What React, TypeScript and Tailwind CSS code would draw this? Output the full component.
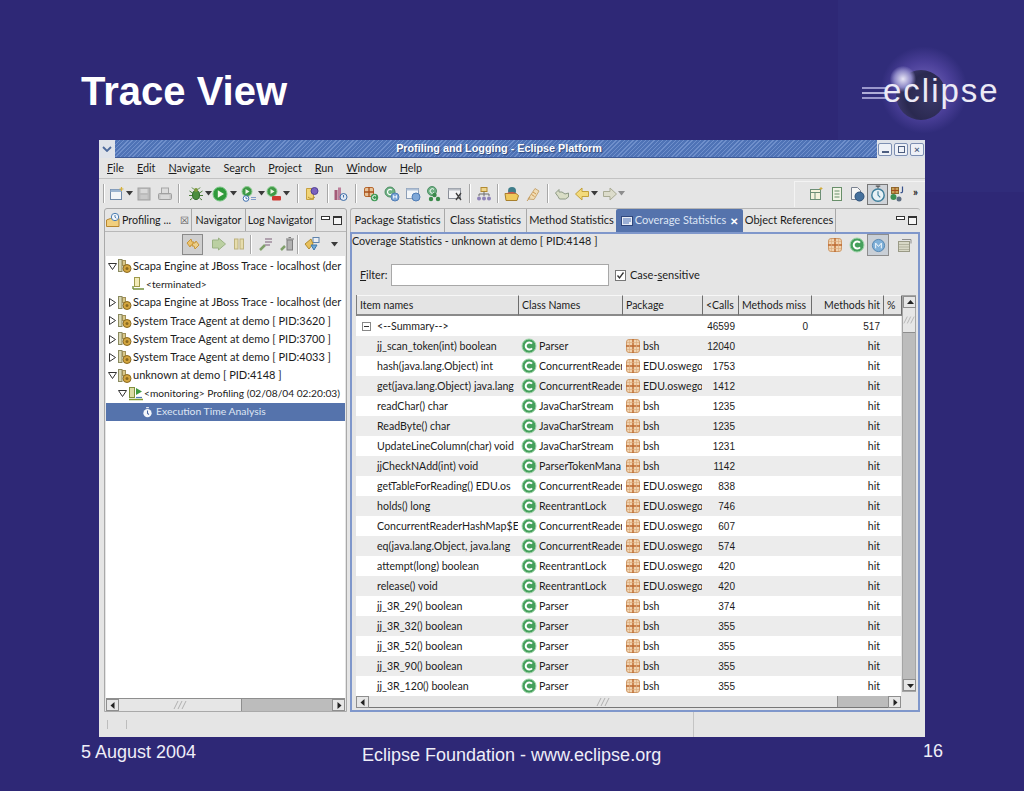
import React from "react";

type P = { children?: React.ReactNode; s?: number };
const Svg = ({ children, s = 16 }: P) => (
  <svg width={s} height={s} viewBox="0 0 16 16" className="shrink-0" fill="none">
    {children}
  </svg>
);

const Cls = () => (
  <Svg>
    <circle cx="8" cy="8" r="7" fill="#45a05c" stroke="#9ed4a8" strokeWidth="1" />
    <path d="M11 5.600A3.600 3.600 0 1 0 11 10.400" stroke="#fff" strokeWidth="2" />
  </Svg>
);
const Pkg = () => (
  <Svg>
    <rect x="1.500" y="1.500" width="13" height="13" rx="2.500" fill="#f0d3b0" stroke="#d09a68" />
    <path d="M8 1v14M1 8h14" stroke="#bd6a30" strokeWidth="1.400" />
    <path d="M4.500 2v12M11.500 2v12M2 4.500h12M2 11.500h12" stroke="#dcae80" strokeWidth=".7" />
  </Svg>
);
const Arrow = () => (
  <svg width="7" height="5" viewBox="0 0 7 5" className="shrink-0">
    <path d="M0 0h7L3.500 4.500z" fill="#3a3a3a" />
  </svg>
);
const ArrowLight = () => (
  <svg width="7" height="5" viewBox="0 0 7 5" className="shrink-0">
    <path d="M0 0h7L3.500 4.500z" fill="#8d8d8d" />
  </svg>
);
const NewI = () => (
  <Svg>
    <rect x="1.500" y="3.500" width="11" height="10" fill="#f3f5f8" stroke="#6f88a8" />
    <path d="M1.500 3.500h11v2.500h-11z" fill="#9cb4d0" />
    <path d="M12.500 1v4M10.500 3h4" stroke="#d8b23c" strokeWidth="1.200" />
  </Svg>
);
const SaveI = () => (
  <Svg>
    <rect x="2" y="2" width="12" height="12" fill="#bcbcbc" stroke="#a2a2a2" />
    <rect x="4.500" y="3" width="7" height="4" fill="#d9d9d9" />
    <rect x="4.500" y="9" width="7" height="4" fill="#c9c9c9" />
  </Svg>
);
const PrintI = () => (
  <Svg>
    <rect x="4.500" y="2" width="7" height="6" fill="#dcdcdc" stroke="#a5a5a5" />
    <rect x="1.500" y="7.500" width="13" height="6" rx="1" fill="#c5c5c5" stroke="#a0a0a0" />
    <path d="M3.500 10h9M3.500 12h9" stroke="#ececec" />
  </Svg>
);
const Bug = () => (
  <Svg>
    <ellipse cx="8" cy="9" rx="3.500" ry="4.500" fill="#4c8f3f" stroke="#2e6a2a" />
    <circle cx="8" cy="4" r="2" fill="#7d9a3a" />
    <path d="M1.500 5l3 2M14.500 5l-3 2M1 9.500h3M15 9.500h-3M2 14l2.500-2M14 14l-2.500-2M4 1.500l2 2M12 1.500l-2 2" stroke="#4a7d38" />
  </Svg>
);
const Run = () => (
  <Svg>
    <circle cx="8" cy="8" r="7" fill="#2f9a3b" stroke="#7ac785" />
    <path d="M5.800 4.200L12 8l-6.200 3.800z" fill="#f2f7ea" />
  </Svg>
);
const RunExt = () => (
  <Svg>
    <circle cx="6" cy="5.500" r="5" fill="#3f9a46" stroke="#8ecb92" />
    <path d="M4.500 3l4 2.500-4 2.500z" fill="#eef5e5" />
    <circle cx="5" cy="12.500" r="2.800" fill="#fff" stroke="#3f6fb0" />
    <path d="M5 11v1.700h1.500" stroke="#3f6fb0" />
    <path d="M10 11.500h5M10 13.500h5" stroke="#7f9cc8" />
  </Svg>
);
const RunRed = () => (
  <Svg>
    <circle cx="6" cy="5.500" r="5" fill="#3f9a46" stroke="#8ecb92" />
    <path d="M4.500 3l4 2.500-4 2.500z" fill="#eef5e5" />
    <rect x="6" y="10" width="9" height="4.500" rx="1" fill="#cf3a32" />
  </Svg>
);
const Persp = () => (
  <Svg>
    <path d="M2.500 2.500h7v11h-7z" fill="#f1d477" stroke="#c6a040" />
    <circle cx="10.500" cy="5" r="3.500" fill="#7a62bf" stroke="#534096" />
    <path d="M4 11c2 2 5 2 7 0" stroke="#b48f36" />
  </Svg>
);
const Bars = () => (
  <Svg>
    <rect x="2.500" y="4" width="3" height="10" fill="#a45a78" />
    <rect x="6" y="1.500" width="3" height="12.500" fill="#bd7f9a" />
    <circle cx="11.500" cy="11" r="3.500" fill="#dfe8f3" stroke="#3f6fa8" />
    <path d="M11.500 9v2.500" stroke="#3f6fa8" />
  </Svg>
);
const PkgC = () => (
  <Svg>
    <rect x="1.500" y="1.500" width="9" height="9" rx="1.500" fill="#e7c39a" stroke="#b86a30" />
    <path d="M6 1v10M1 6h10" stroke="#a8501c" strokeWidth="1.300" />
    <circle cx="11.500" cy="11.500" r="3.700" fill="#3f9a56" />
    <path d="M13 10.200a2 2 0 1 0 0 2.600" stroke="#fff" />
  </Svg>
);
const GreenBlue = () => (
  <Svg>
    <circle cx="6" cy="6" r="5" fill="#6fb184" stroke="#4f8f65" />
    <path d="M8 4.200a2.600 2.600 0 1 0 0 3.600" stroke="#fff" strokeWidth="1.200" />
    <circle cx="11" cy="11" r="4" fill="#7fa8d8" stroke="#4f7cb5" />
    <path d="M9.500 12.500v-3l1.500 2 1.500-2v3" stroke="#fff" strokeWidth=".8" />
  </Svg>
);
const WinBlue = () => (
  <Svg>
    <rect x="1.500" y="2.500" width="12" height="10" fill="#f2f5f8" stroke="#8c9eb6" />
    <path d="M1.500 2.500h12v2h-12z" fill="#b0c1d6" />
    <circle cx="11" cy="11" r="4" fill="#7fa8d8" stroke="#4f7cb5" />
  </Svg>
);
const GreenTri = () => (
  <Svg>
    <circle cx="6" cy="5" r="4.500" fill="#6fb184" stroke="#4f8f65" />
    <path d="M8 3.400a2.300 2.300 0 1 0 0 3.200" stroke="#fff" />
    <circle cx="8.500" cy="9" r="2.200" fill="#3a8a4a" />
    <circle cx="5" cy="13" r="2.200" fill="#3a8a4a" />
    <circle cx="12" cy="13" r="2.200" fill="#3a8a4a" />
  </Svg>
);
const WinX = () => (
  <Svg>
    <rect x="1.500" y="2.500" width="12" height="10" fill="#f2f3f5" stroke="#8a8f98" />
    <path d="M1.500 2.500h12v2h-12z" fill="#b9bdc4" />
    <path d="M9 7l5 7M14 7l-5 7" stroke="#404040" strokeWidth="1.300" />
  </Svg>
);
const Tree = () => (
  <Svg>
    <rect x="5" y="1.500" width="6" height="4" fill="#eed58b" stroke="#b38a30" />
    <path d="M8 5.500V8M3 10V8h10v2M8 8v2" stroke="#6f6f6f" />
    <circle cx="3" cy="12.500" r="2" fill="#8e83b8" />
    <circle cx="8" cy="12.500" r="2" fill="#8e83b8" />
    <circle cx="13" cy="12.500" r="2" fill="#8e83b8" />
  </Svg>
);
const Open = () => (
  <Svg>
    <circle cx="8" cy="5" r="4" fill="#3e7d8a" />
    <path d="M1 7.500h11l2.500 2-1.500 5H2z" fill="#efc95c" stroke="#a8802c" />
    <path d="M3 7.500c1-2 8-2 9 0" fill="#d05a4a" />
  </Svg>
);
const Pin = () => (
  <Svg>
    <path d="M3 13L10 2.500l4 2.500-5 8.500z" fill="#f0dcb4" stroke="#c9a874" />
    <path d="M2 15l3-4" stroke="#c59a5a" />
    <path d="M8 6l3 2M6.500 8.500l3 2" stroke="#cf9850" />
  </Svg>
);
const BackTo = () => (
  <Svg>
    <path d="M1.500 7L5 3.500V6h3l3 2 3.500-1v4l-3 2H5.500L4 10.500z" fill="#d9ddc6" stroke="#8e9a86" />
  </Svg>
);
const Left = () => (
  <Svg>
    <path d="M1.500 8L8 2v3.500h6.500v5H8V14z" fill="#f3da7b" stroke="#c3a13a" />
  </Svg>
);
const Right = () => (
  <Svg>
    <path d="M14.500 8L8 2v3.500H1.500v5H8V14z" fill="#dcdccb" stroke="#a9ab94" />
  </Svg>
);
const Layout1 = () => (
  <Svg>
    <rect x="2.500" y="3.500" width="10" height="10" fill="#f5f3dc" stroke="#6e8f76" />
    <path d="M2.500 6.500h10M7 6.500v7" stroke="#6e8f76" />
    <path d="M13 1v3M11.500 2.500h3" stroke="#d2ac3c" />
  </Svg>
);
const Doc = () => (
  <Svg>
    <rect x="3.500" y="1.500" width="9" height="13" fill="#f1f4e6" stroke="#688f6a" />
    <path d="M5.500 5h5M5.500 8h5M5.500 11h5" stroke="#688f6a" />
  </Svg>
);
const DocGlobe = () => (
  <Svg>
    <path d="M2.500 1.500h6l3 3v9h-9z" fill="#f5f5f5" stroke="#7a8290" />
    <circle cx="10.500" cy="10.500" r="4.500" fill="#45709c" stroke="#2d5078" />
  </Svg>
);
const Watch = () => (
  <svg width="18" height="18" viewBox="0 0 16 16" className="shrink-0" fill="none">
    <path d="M6 1h4M8 1v2" stroke="#555" />
    <circle cx="8" cy="9" r="5.500" fill="#e8f1f6" stroke="#3f7f9c" strokeWidth="1.300" />
    <path d="M8 5.500V9l2 2" stroke="#3f7f9c" />
  </svg>
);
const Java = () => (
  <Svg>
    <rect x="2.500" y="1.500" width="7" height="6" fill="#c9a25a" stroke="#8d6a2e" />
    <path d="M6 1v7M2 4.500h8" stroke="#a14c1e" />
    <circle cx="4.500" cy="11" r="3" fill="#3d8f52" />
    <circle cx="10" cy="13" r="2.500" fill="#5d6d82" />
    <path d="M13.500 0.500v5c0 1-1 1.500-2 1" stroke="#37518c" strokeWidth="1.200" />
  </Svg>
);
const EngineI = () => (
  <Svg>
    <rect x="1.500" y="1.500" width="3.500" height="12" fill="#d9d6b2" stroke="#8a8a60" />
    <rect x="5.500" y="2.500" width="3" height="5" fill="#d9c98a" stroke="#a0905a" />
    <circle cx="10" cy="10.500" r="4" fill="#d4a640" stroke="#8a6a20" />
    <circle cx="10" cy="10.500" r="1.500" fill="#8a6a20" />
  </Svg>
);
const Terminated = () => (
  <Svg>
    <rect x="4.500" y="1.500" width="5" height="9" fill="#f3ecb8" stroke="#9f9a4a" />
    <path d="M3 13h11M3 10v3" stroke="#75913c" strokeWidth="1.400" />
  </Svg>
);
const Monitor = () => (
  <Svg>
    <rect x="1.500" y="1.500" width="5" height="10" fill="#dcdca4" stroke="#7f8f3c" />
    <path d="M8 2l6 3.500L8 9z" fill="#3f9a3f" />
    <path d="M1 13.500h14" stroke="#7f9a2c" strokeWidth="1.500" />
    <path d="M8 11.500h6" stroke="#4f7cb5" strokeWidth="1.200" />
  </Svg>
);
const Analysis = () => (
  <svg width="11" height="11" viewBox="0 0 16 16" className="shrink-0" fill="none">
    <path d="M6 1h4" stroke="#fff" strokeWidth="1.500" />
    <circle cx="8" cy="9" r="6" fill="#f4f6fa" />
    <path d="M8 5v4l2 2" stroke="#47639c" strokeWidth="1.500" />
  </svg>
);
const Profile = () => (
  <Svg>
    <path d="M1.500 8l4-1.500h8.500v8H1.500z" fill="#f1cf7e" stroke="#b8862e" />
    <circle cx="10" cy="5" r="3.700" fill="#f3f6fa" stroke="#4a7db0" />
    <path d="M10 3v2.200l1.300 1" stroke="#4a7db0" />
  </Svg>
);
const Sync = () => (
  <Svg>
    <path d="M2 7l4-4 1 3h2l-1 3H6l-1 2z" fill="#ecc46e" stroke="#c8963a" />
    <path d="M14 9l-4 4-1-3H7l1-3h2l1-2z" fill="#ecd08c" stroke="#c8963a" />
  </Svg>
);
const Play2 = () => (
  <Svg>
    <path d="M1.500 4h6V2l7 6-7 6v-2h-6z" fill="#bbd0a2" stroke="#9bb284" />
  </Svg>
);
const Pause2 = () => (
  <Svg>
    <rect x="3.500" y="3" width="3.500" height="10" fill="#e6dcac" stroke="#bdb27c" />
    <rect x="9" y="3" width="3.500" height="10" fill="#e6dcac" stroke="#bdb27c" />
  </Svg>
);
const Split = () => (
  <Svg>
    <path d="M2 14l5-5" stroke="#7fa06a" strokeWidth="2.500" />
    <path d="M7 3h7M7 6h7M7 9h5" stroke="#9e8a9c" strokeWidth="1.300" />
  </Svg>
);
const Trash = () => (
  <Svg>
    <path d="M2 14l4-4" stroke="#7fa06a" strokeWidth="2.500" />
    <rect x="8" y="4" width="5.500" height="10" fill="#b2b2b2" stroke="#7d7d7d" />
    <path d="M7 3h8M9.500 1.500h2.500" stroke="#7d7d7d" />
  </Svg>
);
const Filters = () => (
  <Svg>
    <rect x="9" y="1.500" width="6" height="5" fill="#e9eef4" stroke="#5f82aa" />
    <path d="M1 8l6-5 2 5-4 5z" fill="#e8c05c" stroke="#b28c2e" />
    <path d="M7 9l6 0-3 5z" fill="#6fa8d8" stroke="#3f78a8" />
  </Svg>
);
const MinMax = () => (
  <div className="flex items-center gap-[3px] shrink-0">
    <div className="w-[9px] h-[4px] border border-[#333] bg-white -mt-[5px]" />
    <div className="w-[9px] h-[9px] border border-[#333] border-t-2 bg-[#f5f5f5]" />
  </div>
);
const Sep = ({ w }: { w: string }) => (
  <div className={`${w} flex justify-center shrink-0`}>
    <div className="w-[2px] h-[19px] border-l border-[#a8a8a8] bg-white" />
  </div>
);
const T = ({ w, children }: { w: string; children: React.ReactNode }) => (
  <div className={`${w} h-[18px] flex items-center justify-center shrink-0`}>{children}</div>
);

const Tri = ({ open }: { open?: boolean }) =>
  open ? (
    <svg width="9" height="7" viewBox="0 0 9 7" className="shrink-0">
      <path d="M.5.500h8L4.500 6.500z" fill="#fff" stroke="#333" />
    </svg>
  ) : (
    <svg width="7" height="9" viewBox="0 0 7 9" className="shrink-0">
      <path d="M.5.500v8L6.500 4.500z" fill="#fff" stroke="#333" />
    </svg>
  );

const EngineRow = ({ open, label }: { open?: boolean; label: string }) => (
  <div className="h-[18.25px] flex items-center text-[11px]">
    <div className="w-[12px] flex justify-center shrink-0">
      <Tri open={open} />
    </div>
    <div className="w-[14px] flex justify-center shrink-0">
      <EngineI />
    </div>
    <span className="ml-[1px]">{label}</span>
  </div>
);

const rows: [string, string, string, string][] = [
  ["jj_scan_token(int) boolean", "Parser", "bsh", "12040"],
  ["hash(java.lang.Object) int", "ConcurrentReader", "EDU.oswego", "1753"],
  ["get(java.lang.Object) java.lang", "ConcurrentReader", "EDU.oswego", "1412"],
  ["readChar() char", "JavaCharStream", "bsh", "1235"],
  ["ReadByte() char", "JavaCharStream", "bsh", "1235"],
  ["UpdateLineColumn(char) void", "JavaCharStream", "bsh", "1231"],
  ["jjCheckNAdd(int) void", "ParserTokenMana", "bsh", "1142"],
  ["getTableForReading() EDU.os", "ConcurrentReader", "EDU.oswego", "838"],
  ["holds() long", "ReentrantLock", "EDU.oswego", "746"],
  ["ConcurrentReaderHashMap$E", "ConcurrentReader", "EDU.oswego", "607"],
  ["eq(java.lang.Object, java.lang", "ConcurrentReader", "EDU.oswego", "574"],
  ["attempt(long) boolean", "ReentrantLock", "EDU.oswego", "420"],
  ["release() void", "ReentrantLock", "EDU.oswego", "420"],
  ["jj_3R_29() boolean", "Parser", "bsh", "374"],
  ["jj_3R_32() boolean", "Parser", "bsh", "355"],
  ["jj_3R_52() boolean", "Parser", "bsh", "355"],
  ["jj_3R_90() boolean", "Parser", "bsh", "355"],
  ["jj_3R_120() boolean", "Parser", "bsh", "355"],
];

const cols = "grid grid-cols-[162px_104px_80px_36px_73px_72px_18px]";
const num = "text-right pr-[3px] pt-[1px] text-[10px] font-['Liberation_Sans',sans-serif]";

const Hd = ({ children, right }: { children?: React.ReactNode; right?: boolean }) => (
  <div
    className={`h-[21px] flex items-center px-[3px] pt-[1px] overflow-hidden border-r border-b-2 border-r-[#6d6d6d] border-b-[#8a8a8a] border-t border-t-[#f7f7f7] bg-[#e4e4e4] ${
      right ? "justify-end" : ""
    }`}
  >
    {children}
  </div>
);

const Arr = ({ d }: { d: "l" | "r" | "u" | "d" }) => {
  const p = { l: "M5.500 1v7L1.500 4.500z", r: "M2.500 1v7l4-3.500z", u: "M1 6h7L4.500 2z", d: "M1 3h7L4.500 7z" }[d];
  return (
    <svg width="8" height="9" viewBox="0 0 8 9">
      <path d={p} fill="#222" />
    </svg>
  );
};
const SBtn = ({ d }: { d: "l" | "r" | "u" | "d" }) => (
  <div className="w-[13px] h-[12px] shrink-0 flex items-center justify-center bg-[#e6e6e6] border border-[#8e8e8e]">
    <Arr d={d} />
  </div>
);

const Hatch = () => (
  <svg width="14" height="8" viewBox="0 0 14 8" fill="none">
    <path d="M1 8l4-8M5 8l4-8M9 8l4-8" stroke="#b0b0b0" />
  </svg>
);

export default function App() {
  return (
    <div className="relative w-[1024px] h-[791px] overflow-hidden bg-[#2e2876] text-white font-['Liberation_Sans',sans-serif] flex flex-col">
      <div className="absolute right-0 top-0 w-[186px] h-[192px] bg-[#302c7a]">
        <div className="absolute left-[42px] top-[46px] w-[88px] h-[88px] rounded-full bg-[radial-gradient(circle,#7a6cc0_0%,#4a3f98_45%,#302c7a_70%)]" />
        <div className="absolute left-[58px] top-[70px] w-[50px] h-[50px] rounded-full bg-[radial-gradient(circle_at_70%_55%,#3a3868_0%,#2a2950_55%,#4a4680_100%)]" />
        <div className="absolute left-[52px] top-[66px] w-[26px] h-[26px] rounded-full bg-[radial-gradient(circle,#e8e6f6_0%,#8d88c6_45%,transparent_72%)]" />
        <div className="absolute left-[24px] top-[87px] w-[24px] flex flex-col gap-[3px]">
          <div className="h-[2px] bg-[#9a97cc]" />
          <div className="h-[2px] bg-[#b0aed8]" />
          <div className="h-[2px] bg-[#9a97cc]" />
        </div>
        <div className="absolute left-[45px] top-[72px] text-[33px] leading-[38px] tracking-[2px] text-[#eceaf6]">
          eclipse
        </div>
      </div>

      <div className="h-[140px] pl-[81px] pt-[69px] shrink-0 relative">
        <h1 className="text-[40px] leading-[45px] font-bold">Trace View</h1>
      </div>

      <div className="relative ml-[99px] w-[826px] h-[597px] shrink-0 bg-[#e5e5e5] flex flex-col text-[#1c1c1c] font-['Lato',sans-serif] text-[10.8px] whitespace-nowrap">
        {/* title bar */}
        <div className="h-[18px] flex shrink-0 items-stretch bg-[#dfe3ea]">
          <div className="w-[16px] bg-[#dfe3ea] flex items-center justify-center">
            <svg width="10" height="6" viewBox="0 0 10 6" fill="none">
              <path d="M1 1l4 4 4-4" stroke="#4d6a9c" strokeWidth="1.800" />
            </svg>
          </div>
          <div className="flex-1 flex items-center justify-center bg-[repeating-linear-gradient(135deg,#6f8fcb_0px,#6f8fcb_1px,#4f73b6_1px,#4f73b6_3px)] border-b border-[#3e5a96]">
            <span className="font-bold text-white text-[10.8px] font-['Liberation_Sans',sans-serif] [text-shadow:1px_1px_1px_#2f4678] ml-[6px]">
              Profiling and Logging - Eclipse Platform
            </span>
          </div>
          <div className="w-[48px] flex items-center justify-center gap-[2px] bg-[#dfe3ea]">
            <div className="w-[14px] h-[13px] rounded-[2px] border border-[#7d8fb2] bg-[#eef1f7] flex items-end justify-center pb-[2px]">
              <div className="w-[7px] h-[2px] bg-[#4d5e80]" />
            </div>
            <div className="w-[14px] h-[13px] rounded-[2px] border border-[#7d8fb2] bg-[#eef1f7] flex items-center justify-center">
              <div className="w-[7px] h-[7px] border border-[#4d5e80]" />
            </div>
            <div className="w-[14px] h-[13px] rounded-[2px] border border-[#7d8fb2] bg-[#eef1f7] flex items-center justify-center text-[10px] font-bold leading-none text-[#4d5e80]">
              ×
            </div>
          </div>
        </div>

        {/* menu */}
        <div className="h-[21px] shrink-0 flex items-center pl-[8px] gap-[13px] border-b border-[#c2c2c2]">
          <span><u>F</u>ile</span>
          <span><u>E</u>dit</span>
          <span><u>N</u>avigate</span>
          <span>Se<u>a</u>rch</span>
          <span><u>P</u>roject</span>
          <span><u>R</u>un</span>
          <span><u>W</u>indow</span>
          <span><u>H</u>elp</span>
        </div>

        {/* toolbar */}
        <div className="h-[29px] shrink-0 flex items-center">
          <Sep w="w-[10px]" />
          <T w="w-[15px]"><NewI /></T>
          <T w="w-[10px]"><Arrow /></T>
          <T w="w-[20px]"><SaveI /></T>
          <T w="w-[21px]"><PrintI /></T>
          <Sep w="w-[8px]" />
          <div className="w-[4px] shrink-0" />
          <T w="w-[18px]"><Bug /></T>
          <T w="w-[6px]"><Arrow /></T>
          <T w="w-[18px]"><Run /></T>
          <T w="w-[8px]"><Arrow /></T>
          <div className="w-[3px] shrink-0" />
          <T w="w-[18px]"><RunExt /></T>
          <T w="w-[6px]"><Arrow /></T>
          <T w="w-[20px]"><RunRed /></T>
          <T w="w-[4px]"><Arrow /></T>
          <div className="w-[5px] shrink-0" />
          <Sep w="w-[10px]" />
          <T w="w-[18px]"><Persp /></T>
          <div className="w-[2px] shrink-0" />
          <Sep w="w-[10px]" />
          <T w="w-[14px]"><Bars /></T>
          <div className="w-[4px] shrink-0" />
          <Sep w="w-[10px]" />
          <T w="w-[20px]"><PkgC /></T>
          <T w="w-[21px]"><GreenBlue /></T>
          <T w="w-[21px]"><WinBlue /></T>
          <T w="w-[21px]"><GreenTri /></T>
          <T w="w-[21px]"><WinX /></T>
          <Sep w="w-[10px]" />
          <T w="w-[18px]"><Tree /></T>
          <Sep w="w-[10px]" />
          <T w="w-[18px]"><Open /></T>
          <T w="w-[24px]"><Pin /></T>
          <Sep w="w-[6px]" />
          <T w="w-[22px]"><BackTo /></T>
          <T w="w-[18px]"><Left /></T>
          <T w="w-[6px]"><Arrow /></T>
          <div className="w-[4px] shrink-0" />
          <T w="w-[18px]"><Right /></T>
          <T w="w-[4px]"><ArrowLight /></T>
          <div className="flex-1" />
          <div className="flex items-center h-[26px] border-l border-t border-[#f3f3f3] pl-[10px]">
            <T w="w-[21px]"><Layout1 /></T>
            <T w="w-[21px]"><Doc /></T>
            <T w="w-[20px]"><DocGlobe /></T>
            <div className="w-[21px] h-[21px] shrink-0 flex items-center justify-center border border-[#777] bg-[#cfd3d8]">
              <Watch />
            </div>
            <T w="w-[18px]"><Java /></T>
            <T w="w-[19px]"><span className="text-[11px] font-bold leading-none -mt-[5px]">»</span></T>
          </div>
        </div>

        {/* panels */}
        <div className="flex-1 min-h-0 flex pl-[5px] gap-[3px]">
          {/* left panel */}
          <div className="w-[243px] h-[504px] shrink-0 flex flex-col border border-[#a9a9a9] rounded-t-[3px] bg-[#e5e5e5]">
            <div className="h-[23px] shrink-0 flex items-stretch border-b border-[#b8b8b8] text-[10.7px]">
              <div className="w-[87px] flex items-center shrink-0 border-r border-[#a9a9a9]">
                <Profile />
                <span className="ml-[1px]">Profiling ...</span>
                <span className="ml-[9px] text-[10px] leading-none text-[#555]">☒</span>
              </div>
              <div className="w-[54px] flex items-center justify-center shrink-0 border-r border-[#a9a9a9]">Navigator</div>
              <div className="w-[70px] flex items-center justify-center shrink-0 border-r border-[#a9a9a9]">Log Navigator</div>
              <div className="flex-1 flex items-center justify-center"><MinMax /></div>
            </div>
            <div className="h-[24px] shrink-0 flex items-center justify-end pr-[1px]">
              <div className="w-[21px] h-[21px] flex items-center justify-center border border-[#8a8a8a] bg-[#cfcfcf] mr-[5px]">
                <Sync />
              </div>
              <T w="w-[22px]"><Play2 /></T>
              <T w="w-[18px]"><Pause2 /></T>
              <Sep w="w-[6px]" />
              <T w="w-[24px]"><Split /></T>
              <T w="w-[18px]"><Trash /></T>
              <Sep w="w-[4px]" />
              <T w="w-[24px]"><Filters /></T>
              <T w="w-[21px]"><Arrow /></T>
            </div>
            <div className="flex-1 min-h-0 bg-white mx-[1px] flex flex-col overflow-hidden">
              <div className="flex-1 min-h-0 overflow-hidden pt-[1px]">
                <EngineRow open label="Scapa Engine at JBoss Trace - localhost (der" />
                <div className="h-[18.25px] flex items-center pl-[24px] text-[10.2px]">
                  <Terminated />
                  <span>&lt;terminated&gt;</span>
                </div>
                <EngineRow label="Scapa Engine at JBoss Trace - localhost (der" />
                <EngineRow label="System Trace Agent at demo [ PID:3620 ]" />
                <EngineRow label="System Trace Agent at demo [ PID:3700 ]" />
                <EngineRow label="System Trace Agent at demo [ PID:4033 ]" />
                <EngineRow open label="unknown at demo [ PID:4148 ]" />
                <div className="h-[18.25px] flex items-center pl-[12px] text-[10.2px]">
                  <Tri open />
                  <span className="ml-[1px] flex"><Monitor /></span>
                  <span>&lt;monitoring&gt; Profiling (02/08/04 02:20:03)</span>
                </div>
                <div className="h-[18.25px] flex items-center pl-[36px] bg-[#5573ac] text-[#dfe6f4] text-[10.4px]">
                  <Analysis />
                  <span className="ml-[3px]">Execution Time Analysis</span>
                </div>
              </div>
              <div className="h-[13px] shrink-0 flex bg-[#bcbcbc] border-t border-[#8e8e8e]">
                <SBtn d="l" />
                <div className="w-[123px] bg-[#e6e6e6] border-r border-[#8e8e8e] flex items-center justify-center"><Hatch /></div>
                <div className="flex-1" />
                <SBtn d="r" />
              </div>
            </div>
          </div>

          {/* right panel */}
          <div className="w-[570px] h-[504px] shrink-0 flex flex-col">
            <div className="h-[24px] shrink-0 flex items-stretch border-t border-l border-[#b5b5b5] rounded-t-[3px] text-[11px]">
              <div className="w-[94px] flex items-center justify-center border-r border-[#a9a9a9] shrink-0">Package Statistics</div>
              <div className="w-[82px] flex items-center justify-center border-r border-[#a9a9a9] shrink-0">Class Statistics</div>
              <div className="w-[89px] flex items-center justify-center shrink-0">Method Statistics</div>
              <div className="w-[127px] flex items-center justify-center shrink-0 bg-[#5573ac] text-[#dde5f4] rounded-t-[2px]">
                <svg width="12" height="10" viewBox="0 0 12 10" className="shrink-0 mr-[2px]">
                  <rect x=".5" y=".5" width="11" height="9" fill="#e8edf5" stroke="#2f477c" />
                  <path d="M2 3h8M2 5h8M2 7h6" stroke="#4f73b6" />
                </svg>
                <span>Coverage Statistics</span>
                <span className="ml-[4px] text-[10px] font-bold leading-none text-white">✕</span>
              </div>
              <div className="w-[93px] flex items-center justify-center border-r border-[#a9a9a9] shrink-0">Object References</div>
              <div className="flex-1 flex items-center justify-end pr-[3px]"><MinMax /></div>
            </div>
            <div className="flex-1 min-h-0 border-2 border-[#7f97cb] flex flex-col bg-[#e5e5e5]">
              <div className="h-[22px] shrink-0 flex items-start">
                <span className="-mt-[1px] leading-[16px]">Coverage Statistics - unknown at demo [ PID:4148 ]</span>
                <div className="flex-1" />
                <div className="flex items-center pr-[2px]">
                  <T w="w-[22px]"><Pkg /></T>
                  <T w="w-[21px]"><Cls /></T>
                  <div className="w-[22px] h-[22px] flex items-center justify-center border border-[#8d8d8d] bg-[#c9cfd6] shrink-0">
                    <svg width="15" height="15" viewBox="0 0 16 16" fill="none">
                      <circle cx="8" cy="8" r="6.500" fill="#7fb0d8" stroke="#5284b0" />
                      <path d="M5 11V5.500l3 3.500 3-3.500V11" stroke="#fff" />
                    </svg>
                  </div>
                  <div className="w-[5px] shrink-0" />
                  <T w="w-[22px]">
                    <svg width="16" height="16" viewBox="0 0 16 16" fill="none">
                      <rect x="1.500" y="4.500" width="11" height="10" fill="#d8d8c6" stroke="#9a9a86" />
                      <path d="M2 7.500h10M2 10h10M2 12.500h10" stroke="#b4b4a0" />
                      <path d="M5 2.500h9v4" stroke="#8e8e8e" />
                    </svg>
                  </T>
                </div>
              </div>
              <div className="h-[39px] shrink-0 flex items-center pl-[8px] pb-[1px]">
                <span className="w-[31px] shrink-0"><u>F</u>ilter:</span>
                <div className="w-[218px] h-[22px] shrink-0 bg-white border border-[#a8a8a8]" />
                <div className="ml-[6px] w-[11px] h-[11px] shrink-0 bg-white border border-[#777] flex items-center justify-center">
                  <svg width="9" height="9" viewBox="0 0 9 9" fill="none">
                    <path d="M1.500 4.500L3.500 7 7.500 1.500" stroke="#333" strokeWidth="1.300" />
                  </svg>
                </div>
                <span className="ml-[4px] text-[11px]">Case-<u>s</u>ensitive</span>
              </div>
              <div className="flex pl-[4px] min-h-0 flex-1 text-[10.6px]">
                <div className="w-[545px] shrink-0 flex flex-col">
                  <div className={`${cols} shrink-0 border-l border-[#7d7d7d] text-[10.5px]`}>
                    <Hd>Item names</Hd>
                    <Hd>Class Names</Hd>
                    <Hd>Package</Hd>
                    <Hd>&lt;Calls</Hd>
                    <Hd>Methods miss</Hd>
                    <Hd right>Methods hit</Hd>
                    <Hd>%</Hd>
                  </div>
                  <div className="h-[380px] shrink-0 overflow-hidden bg-white">
                    <div className={`${cols} h-[20px] items-center`}>
                      <div className="flex items-center pl-[6px] pt-[1px]">
                        <div className="w-[9px] h-[9px] border border-[#888] mr-[6px] flex items-center justify-center">
                          <div className="w-[5px] h-[1px] bg-[#333]" />
                        </div>
                        &lt;--Summary--&gt;
                      </div>
                      <div />
                      <div />
                      <div className={num}>46599</div>
                      <div className={num}>0</div>
                      <div className={num}>517</div>
                      <div />
                    </div>
                    {rows.map((r, i) => (
                      <div key={i} className={`${cols} h-[20px] items-center ${i % 2 === 0 ? "bg-[#ececec]" : "bg-white"}`}>
                        <div className="pl-[21px] pt-[1px] overflow-hidden">{r[0]}</div>
                        <div className="flex items-center pl-[3px] overflow-hidden">
                          <Cls />
                          <span className="ml-[2px] pt-[1px]">{r[1]}</span>
                        </div>
                        <div className="flex items-center pl-[3px] overflow-hidden">
                          <Pkg />
                          <span className="ml-[2px] pt-[1px]">{r[2]}</span>
                        </div>
                        <div className={num}>{r[3]}</div>
                        <div />
                        <div className="text-right pr-[3px] pt-[1px]">hit</div>
                        <div />
                      </div>
                    ))}
                  </div>
                  <div className="h-[12px] shrink-0 flex bg-[#bcbcbc] border-b border-[#777]">
                    <SBtn d="l" />
                    <div className="w-[469px] bg-[#e6e6e6] border-r border-[#8e8e8e] flex items-center justify-center"><Hatch /></div>
                    <div className="flex-1" />
                    <SBtn d="r" />
                  </div>
                </div>
                <div className="w-[14px] h-[397px] ml-[1px] shrink-0 flex flex-col bg-[#bcbcbc] border border-[#a5a5a5]">
                  <SBtn d="u" />
                  <div className="h-[25px] shrink-0 bg-[#e6e6e6] border-b border-[#8e8e8e] flex items-center justify-center">
                    <Hatch />
                  </div>
                  <div className="flex-1" />
                  <SBtn d="d" />
                </div>
              </div>
            </div>
          </div>
        </div>

        {/* status */}
        <div className="h-[25px] shrink-0 flex items-center pl-[8px]">
          <div className="w-[1px] h-[9px] bg-[#bdbdbd]" />
          <div className="w-[1px] h-[9px] bg-[#bdbdbd] ml-[18px]" />
          <div className="w-[1px] h-[25px] bg-[#c4c4c4] ml-[566px]" />
        </div>
      </div>

      <div className="relative flex-1 flex items-start text-[#eeeef8]">
        <div className="w-[362px] pl-[81px] pt-[5px] text-[18px] leading-[20px]">5 August 2004</div>
        <div className="w-[300px] pt-[7px] text-[18px] leading-[22px] whitespace-nowrap">Eclipse Foundation - www.eclipse.org</div>
        <div className="pl-[261px] pt-[3px] text-[18px] leading-[22px]">16</div>
      </div>
    </div>
  );
}
